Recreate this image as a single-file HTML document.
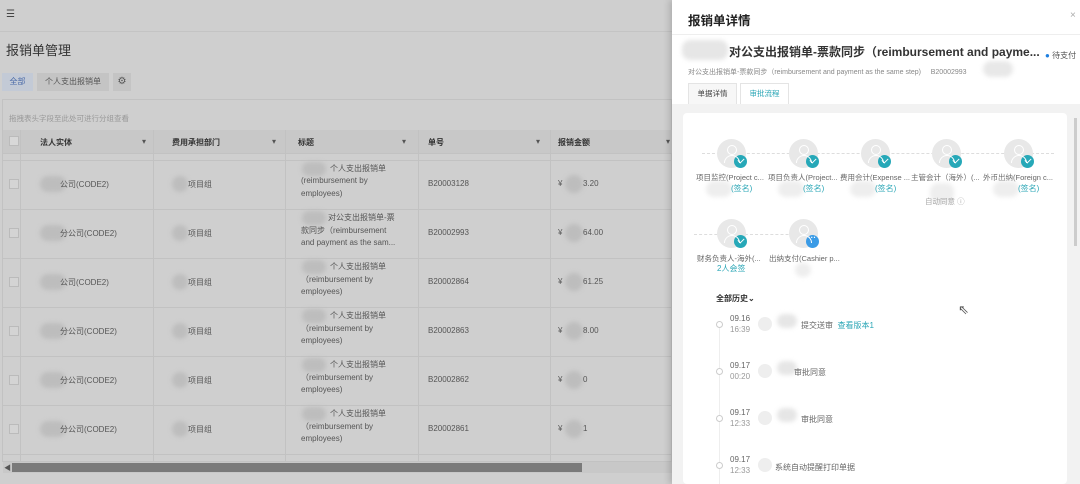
<!DOCTYPE html><html><head><meta charset="utf-8"><style>
*{box-sizing:border-box;margin:0;padding:0}
body{width:1080px;height:484px;overflow:hidden;position:relative;font-family:"Liberation Sans","Noto Sans CJK SC",sans-serif;background:#cfcfcf;color:#333}
.a{position:absolute}
.blur{position:absolute;background:#bdbdbd;border-radius:8px;filter:blur(2px)}
.cell{position:absolute;font-size:8px;color:#555}
.hl{position:absolute;left:3px;width:669px;height:1px;background:#c2c2c2}
.vl{position:absolute;top:130px;width:1px;height:332px;background:#c2c2c2}
.av{position:absolute;width:29px;height:29px;border-radius:50%;background:#e8e8e8}
.av:before{content:"";position:absolute;left:10px;top:6px;width:8px;height:8px;border:1.5px solid #fff;border-radius:50%}
.av:after{content:"";position:absolute;left:7px;top:16px;width:14px;height:7px;border:1.5px solid #fff;border-bottom:none;border-radius:8px 8px 0 0}
.ck{position:absolute;left:17px;top:16px;width:13px;height:13px;border-radius:50%;background:#26a8b8}
.ck:after{content:"";position:absolute;left:4px;top:3px;width:5px;height:3px;border-left:1.3px solid #fff;border-bottom:1.3px solid #fff;transform:rotate(-45deg)}
.ck.dot{background:#3a9be6}
.ck.dot:after{content:"···";border:none;transform:none;left:2px;top:-2px;width:auto;height:auto;color:#fff;font-size:8px;font-weight:bold}
.nm{position:absolute;font-size:7.5px;color:#666;white-space:nowrap}
.sg{position:absolute;font-size:8px;color:#2aa6b6}
.tl{position:absolute;font-size:8px;color:#666}
.sa{position:absolute;width:14px;height:14px;border-radius:50%;background:#eee}
</style></head><body>
<div class="a" style="left:6px;top:9px;font-size:10px;color:#444">☰</div>
<div class="a" style="left:0;top:31px;width:672px;height:1px;background:#c4c4c4"></div>
<div class="a" style="left:6px;top:40px;font-size:13px;color:#333">报销单管理</div>
<div class="a" style="left:2px;top:73px;width:31px;height:18px;background:#c3cad6;font-size:8px;color:#4a6aa8;text-align:center;line-height:18px">全部</div>
<div class="a" style="left:37px;top:73px;width:72px;height:18px;background:#c4c4c4;font-size:8px;color:#555;text-align:center;line-height:18px">个人支出报销单</div>
<div class="a" style="left:113px;top:73px;width:18px;height:18px;background:#c4c4c4;font-size:10px;color:#555;text-align:center;line-height:18px">⚙</div>
<div class="a" style="left:2px;top:99px;width:670px;height:363px;border:1px solid #c2c2c2"></div>
<div class="a" style="left:9px;top:113px;font-size:7.5px;color:#999">拖拽表头字段至此处可进行分组查看</div>
<div class="a" style="left:3px;top:130px;width:669px;height:23px;background:#c8c8c8"></div>
<div class="a" style="left:9px;top:136px;width:10px;height:10px;background:#d8d8d8;border:1px solid #bbb"></div>
<div class="cell" style="left:40px;top:137px;font-weight:bold;color:#333">法人实体</div>
<div class="cell" style="left:172px;top:137px;font-weight:bold;color:#333">费用承担部门</div>
<div class="cell" style="left:298px;top:137px;font-weight:bold;color:#333">标题</div>
<div class="cell" style="left:428px;top:137px;font-weight:bold;color:#333">单号</div>
<div class="cell" style="left:558px;top:137px;font-weight:bold;color:#333">报销金额</div>
<div class="cell" style="left:142px;top:137px">▾</div><div class="cell" style="left:272px;top:137px">▾</div><div class="cell" style="left:402px;top:137px">▾</div><div class="cell" style="left:536px;top:137px">▾</div><div class="cell" style="left:666px;top:137px">▾</div>
<div class="vl" style="left:20px"></div><div class="vl" style="left:153px"></div><div class="vl" style="left:285px"></div><div class="vl" style="left:418px"></div><div class="vl" style="left:550px"></div>
<div class="hl" style="top:153px"></div><div class="hl" style="top:160px"></div><div class="hl" style="top:209px"></div><div class="hl" style="top:258px"></div><div class="hl" style="top:307px"></div><div class="hl" style="top:356px"></div><div class="hl" style="top:405px"></div><div class="hl" style="top:454px"></div>
<div id="rows"></div>
<div class="a" style="left:3px;top:462px;width:669px;height:11px;background:#c8c8c8"></div>
<div class="a" style="left:12px;top:463px;width:570px;height:9px;background:#7a7a7a"></div>
<div class="a" style="left:4px;top:463px;font-size:7px;color:#555">◀</div>
<script>
var rows=[[184,"公司(CODE2)","个人支出报销单","(reimbursement by","employees)","B20003128","3.20"],[233,"分公司(CODE2)","对公支出报销单-票","款同步（reimbursement","and payment as the sam...","B20002993","64.00"],[282,"公司(CODE2)","个人支出报销单","（reimbursement by","employees)","B20002864","61.25"],[331,"分公司(CODE2)","个人支出报销单","（reimbursement by","employees)","B20002863","8.00"],[380,"分公司(CODE2)","个人支出报销单","（reimbursement by","employees)","B20002862","0"],[429,"分公司(CODE2)","个人支出报销单","（reimbursement by","employees)","B20002861","1"]];
var h="";rows.forEach(function(r){var y=r[0];
h+='<div class="a" style="left:9px;top:'+(y-5)+'px;width:10px;height:10px;border:1px solid #bbb;background:#d4d4d4"></div>';
h+='<div class="blur" style="left:40px;top:'+(y-8)+'px;width:26px;height:16px"></div><div class="cell" style="left:'+(r[1].length>7?60:66)+'px;top:'+(y-5)+'px">'+r[1]+'</div>';
h+='<div class="blur" style="left:172px;top:'+(y-8)+'px;width:16px;height:16px"></div><div class="cell" style="left:188px;top:'+(y-5)+'px">项目组</div>';
h+='<div class="blur" style="left:302px;top:'+(y-22)+'px;width:24px;height:14px"></div><div class="cell" style="left:'+(r[2].length>7?328:330)+'px;top:'+(y-21)+'px">'+r[2]+'</div><div class="cell" style="left:301px;top:'+(y-8)+'px">'+r[3]+'</div><div class="cell" style="left:301px;top:'+(y+5)+'px">'+r[4]+'</div>';
h+='<div class="cell" style="left:428px;top:'+(y-5)+'px">'+r[5]+'</div>';
h+='<div class="cell" style="left:558px;top:'+(y-5)+'px">¥</div><div class="blur" style="left:565px;top:'+(y-9)+'px;width:18px;height:18px;border-radius:50%"></div><div class="cell" style="left:583px;top:'+(y-5)+'px">'+r[6]+'</div>';});
document.getElementById("rows").innerHTML=h;
</script>
<div class="a" style="left:672px;top:0;width:408px;height:484px;background:#fff;box-shadow:-3px 0 6px rgba(0,0,0,.15)">
<div class="a" style="left:16px;top:10px;font-size:12.5px;font-weight:bold;color:#222">报销单详情</div>
<div class="a" style="left:398px;top:10px;font-size:10px;color:#aaa">×</div>
<div class="a" style="left:0;top:34px;width:408px;height:1px;background:#eee"></div>
<div class="blur" style="left:10px;top:40px;width:46px;height:20px;background:#e6e6e6"></div>
<div class="a" style="left:57px;top:43px;font-size:12px;font-weight:bold;color:#333;white-space:nowrap">对公支出报销单-票款同步（reimbursement and payme...</div>
<div class="a" style="left:371px;top:50px;font-size:8px;color:#555;background:#fff;padding-left:2px"><span style="color:#1e7fe0">●</span> 待支付</div>
<div class="a" style="left:16px;top:67px;font-size:7px;color:#888;white-space:nowrap">对公支出报销单-票款同步（reimbursement and payment as the same step)&nbsp;&nbsp;&nbsp;&nbsp;&nbsp;B20002993</div>
<div class="blur" style="left:311px;top:61px;width:30px;height:16px;background:#e8e8e8"></div>
<div class="a" style="left:16px;top:83px;width:49px;height:21px;border:1px solid #e4e4e4;border-bottom:none;background:#f7f7f7;font-size:7.5px;color:#444;text-align:center;line-height:20px">单据详情</div>
<div class="a" style="left:68px;top:83px;width:49px;height:21px;border:1px solid #e4e4e4;border-bottom:none;background:#fff;font-size:7.5px;color:#2aa6b6;text-align:center;line-height:20px">审批流程</div>
<div class="a" style="left:0;top:104px;width:408px;height:380px;background:#f2f2f2"></div>
<div class="a" style="left:11px;top:113px;width:384px;height:371px;background:#fff;border-radius:4px"></div>
<div class="a" style="left:402px;top:118px;width:3px;height:128px;background:#ccc"></div>
<div class="a" style="left:30px;top:153px;width:352px;border-top:1px dashed #ddd"></div>
<div class="a" style="left:22px;top:234px;width:120px;border-top:1px dashed #ddd"></div>
</div>
<div id="flow"></div>
<script>
var f="";var xs=[716,788,860,931,1003];var nm=["项目监控(Project c...","项目负责人(Project...","费用会计(Expense ...","主管会计（海外）(...","外币出纳(Foreign c..."];
xs.forEach(function(x,i){f+='<div class="av" style="left:'+(x+1)+'px;top:139px"><div class="ck"></div></div><div class="nm" style="left:'+(x-20)+'px;top:172px">'+nm[i]+'</div>';
if(i!=3)f+='<div class="blur" style="left:'+(x-10)+'px;top:181px;width:26px;height:16px;background:#eee"></div><div class="sg" style="left:'+(x+15)+'px;top:183px">(签名)</div>';});
f+='<div class="blur" style="left:930px;top:183px;width:24px;height:20px;background:#eee"></div><div class="nm" style="left:925px;top:196px;color:#aaa">自动同意 ⓘ</div>';
f+='<div class="av" style="left:717px;top:219px"><div class="ck"></div></div><div class="nm" style="left:697px;top:253px">财务负责人-海外(...</div><div class="sg" style="left:717px;top:263px">2人会签</div>';
f+='<div class="av" style="left:789px;top:219px"><div class="ck dot"></div></div><div class="nm" style="left:769px;top:253px">出纳支付(Cashier p...</div><div class="blur" style="left:795px;top:263px;width:16px;height:14px;background:#eee"></div>';
f+='<div class="a" style="left:716px;top:293px;font-size:8px;font-weight:bold;color:#333">全部历史⌄</div>';
f+='<div class="a" style="left:719px;top:324px;width:1px;height:160px;background:#eee"></div>';
var hs=[[318,"09.16","16:39","提交送审"],[365,"09.17","00:20","审批同意"],[412,"09.17","12:33","审批同意"],[459,"09.17","12:33",""]];
hs.forEach(function(r){var y=r[0];f+='<div class="a" style="left:716px;top:'+(y+3)+'px;width:7px;height:7px;border:1px solid #ccc;border-radius:50%;background:#fff"></div><div class="tl" style="left:730px;top:'+(y-4)+'px">'+r[1]+'</div><div class="tl" style="left:730px;top:'+(y+7)+'px;color:#999">'+r[2]+'</div><div class="sa" style="left:758px;top:'+(y-1)+'px"></div>';
if(r[3])f+='<div class="blur" style="left:777px;top:'+(y-4)+'px;width:20px;height:14px;background:#e6e6e6"></div>';});
f+='<div class="tl" style="left:801px;top:320px">提交送审 <span style="color:#2aa6b6">&nbsp;查看版本1</span></div><div class="tl" style="left:794px;top:367px">审批同意</div><div class="tl" style="left:801px;top:414px">审批同意</div><div class="tl" style="left:775px;top:462px">系统自动提醒打印单据</div>';
f+='<div class="a" style="left:958px;top:302px;font-size:13px;color:#555">⇖</div>';
document.getElementById("flow").innerHTML=f;
</script>
</body></html>
